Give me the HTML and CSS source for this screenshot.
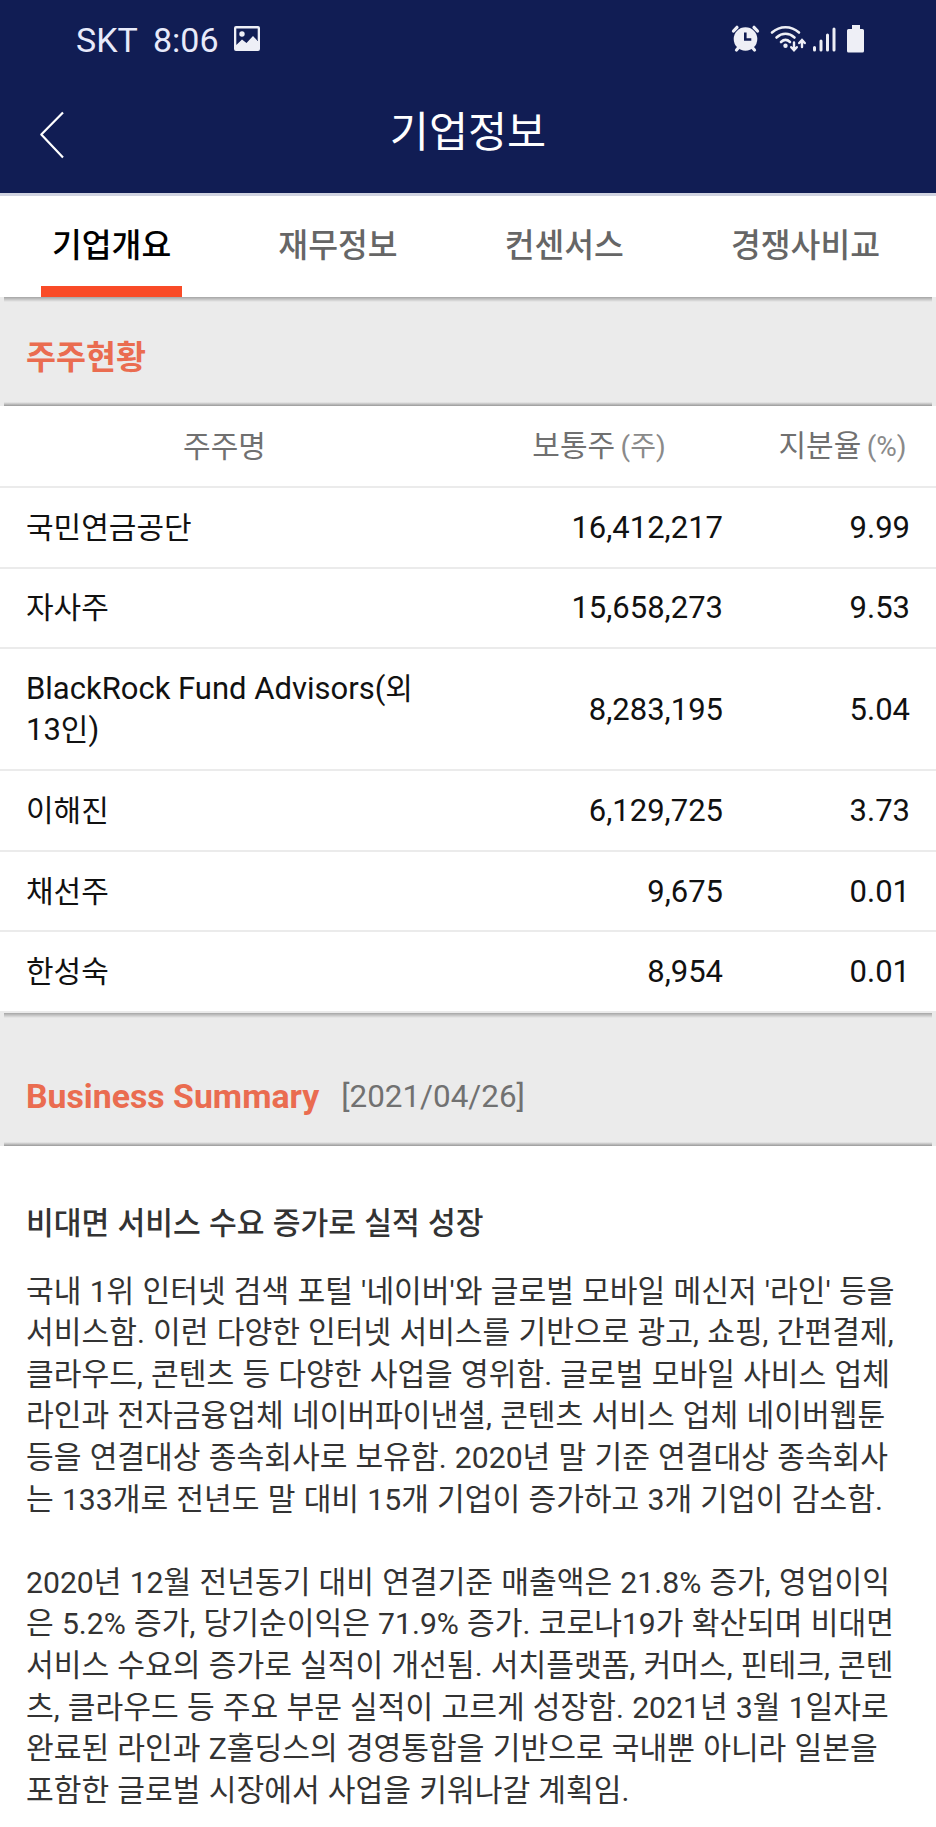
FILE: index.html
```
<!DOCTYPE html>
<html lang="ko">
<head>
    <meta charset="UTF-8">
    <meta name="viewport" content="width=device-width, initial-scale=1.0">
    <title>기업정보</title>
    <link rel="stylesheet" href="styles.css">
</head>
<body>
    <header class="header">
        <div class="status-bar">
            <div class="status-left">
                <span class="carrier">SKT</span>
                <span class="clock">8:06</span>
                <svg class="icon-image" width="26" height="26" viewBox="0 0 26 26">
                    <path fill="#eeeff6" fill-rule="evenodd" d="M2 0h22a2 2 0 0 1 2 2v21a2 2 0 0 1-2 2H2a2 2 0 0 1-2-2V2a2 2 0 0 1 2-2zM2.300 2.500V19L8 13.500l4.500 3.500L19 10l4.700 5V2.500z"/>
                    <circle cx="8" cy="8" r="2.700" fill="#eeeff6"/>
                </svg>
            </div>
            <svg class="status-icons" width="136" height="30" viewBox="0 0 136 30">
                <g fill="none" stroke="#eeeff6" stroke-linecap="round">
                    <path stroke-width="3.200" d="M2.500 7l3.500-3.700M26.500 7L23 3.300M5.500 26l3-3.500M23.500 26l-3-3.500"/>
                    <path stroke-width="2.600" d="M41 8.500c8-7 19-7 27 0M45.500 13.500c5.500-5 12.500-5 18 0M50 18c3-2.700 6-2.700 9 0"/>
                    <path stroke-width="2.400" d="M63 18.500v7M60.200 23.200l2.800 3 2.800-3M71 23v-6.500M68.200 19l2.800-3 2.800 3"/>
                    <path stroke-width="3" d="M83.500 23.500v2.500M90 17v9M96.500 11v15M103 5v21"/>
                </g>
                <circle cx="14.500" cy="15" r="11.800" fill="#eeeff6"/>
                <path d="M14.300 8.500v7h6" fill="none" stroke="#111d54" stroke-width="2.600"/>
                <circle cx="54.500" cy="21.700" r="2.200" fill="#eeeff6"/>
                <path fill="#eeeff6" d="M121 1h8v4h2.500a1.500 1.500 0 0 1 1.500 1.500V27a1.500 1.500 0 0 1-1.500 1.500h-14A1.500 1.500 0 0 1 116 27V6.500A1.500 1.500 0 0 1 117.500 5h3.500z"/>
            </svg>
        </div>
        <div class="title-bar">
            <svg class="icon-back" width="26" height="50" viewBox="0 0 26 50">
                <path d="M24 2.500L2.300 24.500 24 47.500" fill="none" stroke="#fff" stroke-width="2.200" stroke-linejoin="round"/>
            </svg>
            <h1 class="title">기업정보</h1>
        </div>
    </header>

    <nav class="tabs">
        <div class="tab active">기업개요</div>
        <div class="tab">재무정보</div>
        <div class="tab">컨센서스</div>
        <div class="tab">경쟁사비교</div>
    </nav>

    <div class="section">
        <h2 class="section-title">주주현황</h2>
    </div>

    <table class="holders">
        <thead>
            <tr>
                <th class="name">주주명</th>
                <th class="shares">보통주 <span class="unit">(주)</span></th>
                <th class="ratio">지분율 <span class="unit">(%)</span></th>
            </tr>
        </thead>
        <tbody>
            <tr><td>국민연금공단</td><td class="num">16,412,217</td><td class="num">9.99</td></tr>
            <tr><td>자사주</td><td class="num">15,658,273</td><td class="num">9.53</td></tr>
            <tr class="two-line"><td><span class="latin">BlackRock Fund Advisors(</span>외<br><span class="latin">13</span>인<span class="latin">)</span></td><td class="num">8,283,195</td><td class="num">5.04</td></tr>
            <tr><td>이해진</td><td class="num">6,129,725</td><td class="num">3.73</td></tr>
            <tr><td>채선주</td><td class="num">9,675</td><td class="num">0.01</td></tr>
            <tr><td>한성숙</td><td class="num">8,954</td><td class="num">0.01</td></tr>
        </tbody>
    </table>

    <div class="section section-summary">
        <h2 class="section-title">Business Summary</h2>
        <span class="date">[2021/04/26]</span>
    </div>

    <div class="summary">
        <h3 class="summary-title">비대면 서비스 수요 증가로 실적 성장</h3>
        <p>국내 1위 인터넷 검색 포털 '네이버'와 글로벌 모바일 메신저 '라인' 등을<br>
        서비스함. 이런 다양한 인터넷 서비스를 기반으로 광고, 쇼핑, 간편결제,<br>
        클라우드, 콘텐츠 등 다양한 사업을 영위함. 글로벌 모바일 사비스 업체<br>
        라인과 전자금융업체 네이버파이낸셜, 콘텐츠 서비스 업체 네이버웹툰<br>
        등을 연결대상 종속회사로 보유함. 2020년 말 기준 연결대상 종속회사<br>
        는 133개로 전년도 말 대비 15개 기업이 증가하고 3개 기업이 감소함.</p>
        <p>2020년 12월 전년동기 대비 연결기준 매출액은 21.8% 증가, 영업이익<br>
        은 5.2% 증가, 당기순이익은 71.9% 증가. 코로나19가 확산되며 비대면<br>
        서비스 수요의 증가로 실적이 개선됨. 서치플랫폼, 커머스, 핀테크, 콘텐<br>
        츠, 클라우드 등 주요 부문 실적이 고르게 성장함. 2021년 3월 1일자로<br>
        완료된 라인과 Z홀딩스의 경영통합을 기반으로 국내뿐 아니라 일본을<br>
        포함한 글로벌 시장에서 사업을 키워나갈 계획임.</p>
    </div>
</body>
</html>
```
FILE: styles.css
```
* {
    box-sizing: border-box;
}

body {
    margin: 0;
    height: 1827px;
    overflow: hidden;
    background-color: #fff;
    font-family: Roboto, "Noto Sans CJK KR", sans-serif;
    font-size: 30px;
    color: #111;
}

h1, h2, h3, p {
    margin: 0;
}

.header {
    height: 196px;
    background-color: #111d54;
    border-bottom: 3px solid #d0d3e0;
    color: #fff;
}

.status-bar {
    display: flex;
    justify-content: space-between;
    height: 80px;
    padding: 0 69px 0 76px;
}

.status-left {
    display: flex;
    align-items: center;
    color: #e8eafa;
    font-size: 34px;
}

.carrier {
    width: 77px;
}

.clock {
    width: 81px;
}

.icon-image {
    margin-bottom: 3px;
}

.status-icons {
    margin-top: 24px;
}

.title-bar {
    display: grid;
    grid-template-columns: 106px 1fr 106px;
    align-items: center;
    height: 104px;
}

.icon-back {
    margin-left: 39px;
    margin-top: 5px;
}

.title {
    padding-bottom: 8px;
    font-size: 42.500px;
    font-weight: 400;
    text-align: center;
}

/* tabs */
.tabs {
    display: flex;
    justify-content: space-between;
    height: 101px;
    padding: 0 45px 0 41px;
}

.tab {
    padding: 0 11px;
    font-size: 32.400px;
    font-weight: 500;
    line-height: 100px;
    color: #666;
}

.tab.active {
    color: #000;
    border-bottom: 11px solid #f94b27;
}

/* gray bars, shadow on both edges */
.section {
    display: flex;
    align-items: center;
    height: 109px;
    padding: 5px 26px 0;
    background:
        linear-gradient(#a5a5a5, #ebebeb) 4px 0 / calc(100% - 8px) 5px no-repeat,
        linear-gradient(#ebebeb, #999) 4px 100% / calc(100% - 8px) 4px no-repeat,
        #ebebeb;
}

.section-title {
    font-size: 32.600px;
    font-weight: 700;
    color: #ea6c50;
}

.section-summary {
    height: 133px;
    padding-top: 35px;
}

.section-summary .section-title {
    font-size: 33.800px;
}

.date {
    margin-left: 22px;
    font-size: 31.400px;
    color: #717171;
}

/* shareholders */
.holders {
    width: 100%;
    border-collapse: separate;
    border-spacing: 0;
    table-layout: fixed;
    line-height: 41px;
}

.holders th {
    height: 82px;
    padding: 0;
    border-bottom: 2px solid #ebebeb;
    color: #707070;
    font-weight: 400;
}

.name {
    width: 449px;
}

.shares {
    width: 300px;
}

.unit {
    margin-left: -2px;
    color: #8a8a8a;
    font-size: 28px;
}

.holders td {
    height: 80.600px;
    padding: 0 26px;
    border-bottom: 2px solid #ebebeb;
}

.holders .two-line td {
    height: 122px;
}

.holders .num {
    font-size: 31px;
    text-align: right;
}

.latin {
    font-size: 31px;
}

.summary {
    padding: 57px 26px 0;
    line-height: 41.600px;
    color: #333;
    font-size: 30.150px;
    word-spacing: 0.700px;
    white-space: nowrap;
}

.summary-title {
    margin-bottom: 26px;
    font-size: 30.200px;
    font-weight: 500;
}

.summary p {
    margin-bottom: 41.600px;
}
```
